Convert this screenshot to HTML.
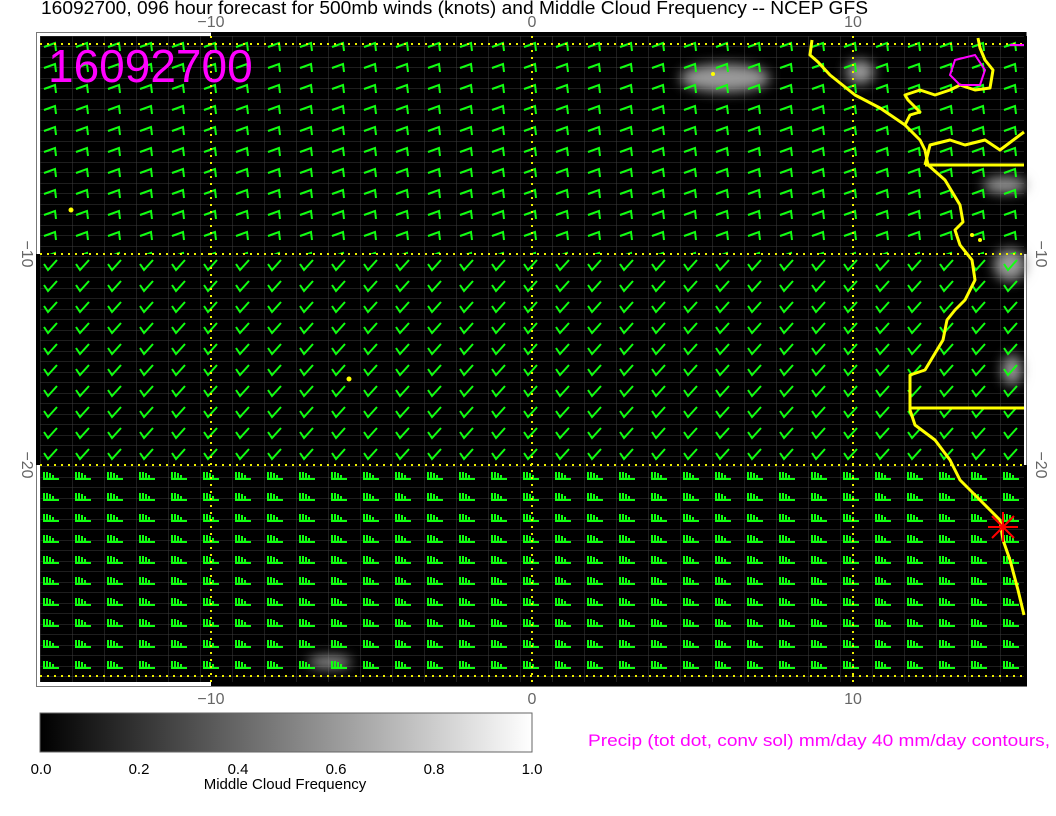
<!DOCTYPE html>
<html><head><meta charset="utf-8"><style>
body{margin:0;width:1056px;height:816px;background:#fff;overflow:hidden;font-family:"Liberation Sans",sans-serif}
</style></head><body>
<svg width="1056" height="816" xmlns="http://www.w3.org/2000/svg" style="position:absolute;left:0;top:0">
<defs>
<pattern id="grid" x="40" y="36" width="32" height="10.5" patternUnits="userSpaceOnUse">
<path d="M0 0H32M0 0V10.5" stroke="#3c3c3c" stroke-width="1" fill="none"/>
</pattern>
<pattern id="b1" x="40" y="33" width="32" height="21" patternUnits="userSpaceOnUse">
<path d="M4 14L15 10L16 18" stroke="#1f1" stroke-width="2" fill="none"/>
</pattern>
<pattern id="b2" x="40" y="254" width="32" height="21" patternUnits="userSpaceOnUse">
<path d="M4 10L8 16L17 6" stroke="#1f1" stroke-width="2" fill="none"/>
</pattern>
<pattern id="b3" x="40" y="465" width="32" height="21" patternUnits="userSpaceOnUse">
<path d="M3 14H19M4 7V14M7 7V14M10 8V14M13 10V14" stroke="#1f1" stroke-width="2" fill="none"/>
</pattern>
<linearGradient id="cb"><stop offset="0" stop-color="#000"/><stop offset="1" stop-color="#fff"/></linearGradient>
<filter id="bl"><feGaussianBlur stdDeviation="6"/></filter>
</defs>
<text x="41" y="14" font-size="18" fill="#000" textLength="827" lengthAdjust="spacingAndGlyphs">16092700, 096 hour forecast for 500mb winds (knots) and Middle Cloud Frequency -- NCEP GFS</text>
<g font-size="16" fill="#666" text-anchor="middle">
<text x="211" y="27">−10</text><text x="532" y="27">0</text><text x="853" y="27">10</text>
<text x="211" y="704">−10</text><text x="532" y="704">0</text><text x="853" y="704">10</text>
<text transform="translate(22,254) rotate(90)">−10</text>
<text transform="translate(22,465) rotate(90)">−20</text>
<text transform="translate(1036,254) rotate(90)">−10</text>
<text transform="translate(1036,465) rotate(90)">−20</text>
</g>
<rect x="36.5" y="32.5" width="990" height="654" fill="none" stroke="#777"/>
<rect x="211" y="32" width="815" height="4" fill="#000"/>
<rect x="211" y="682" width="815" height="4" fill="#000"/>
<rect x="36" y="254" width="4" height="211" fill="#000"/>
<rect x="1024" y="36" width="3" height="218" fill="#000"/>
<rect x="1024" y="465" width="3" height="221" fill="#000"/>
<rect x="40" y="36" width="984" height="646" fill="#000"/>
<rect x="40" y="36" width="984" height="646" fill="url(#grid)"/>
<g filter="url(#bl)" fill="#999">
<ellipse cx="725" cy="78" rx="45" ry="14"/><ellipse cx="860" cy="72" rx="14" ry="12"/>
<ellipse cx="1005" cy="185" rx="22" ry="8"/><ellipse cx="1010" cy="265" rx="16" ry="16"/>
<ellipse cx="1012" cy="370" rx="10" ry="15"/><ellipse cx="330" cy="662" rx="22" ry="6"/>
</g>
<rect x="40" y="36" width="984" height="218" fill="url(#b1)"/>
<rect x="40" y="254" width="984" height="211" fill="url(#b2)"/>
<rect x="40" y="465" width="984" height="217" fill="url(#b3)"/>
<g stroke="#ee0" stroke-width="2" stroke-dasharray="2 5" fill="none">
<path d="M211 36V682M532 36V682M853 36V682M40 44H1024M40 254H1024M40 465H1024M40 676H1024"/>
</g>
<g stroke="#ff0" stroke-width="3" fill="none" stroke-linejoin="round">
<path d="M812 40L810 55L818 62L830 75L855 95L880 108L905 125L920 140L925 150L928 165L945 180L960 205L963 222L955 230L960 245L972 260L975 280L965 300L955 310L947 320L943 340L925 370L910 375L910 410L915 425L935 440L950 460L960 480L980 500L1000 520L1003 540L1010 560L1018 590L1024 615"/>
<path d="M925 165H1024M910 408H1024M905 125L910 115L920 112L908 100L905 95L920 90L935 95L950 90L960 85L975 90L990 88L993 70L985 60L980 48L978 38"/>
<path d="M925 165L930 145L950 140L965 145L985 140L1000 150L1024 132"/>
</g>
<g fill="#ff0"><circle cx="71" cy="210" r="2.5"/><circle cx="349" cy="379" r="2.5"/><circle cx="713" cy="74" r="2"/><circle cx="972" cy="235" r="2"/><circle cx="980" cy="240" r="2"/></g>
<g stroke="#f0f" stroke-width="2" fill="none"><path d="M955 60L975 55L985 70L980 85L960 85L950 75Z"/><path d="M1010 45L1024 45"/></g>
<g stroke="#f00" stroke-width="2"><path d="M988 527H1018M1003 512V542M992 516L1014 538M992 538L1014 516"/></g>
<text x="48" y="82" font-size="46" fill="#f0f">16092700</text>
<rect x="40" y="713" width="492" height="39" fill="url(#cb)" stroke="#666"/>
<g font-size="15" fill="#000" text-anchor="middle">
<text x="41" y="774">0.0</text><text x="139" y="774">0.2</text><text x="238" y="774">0.4</text><text x="336" y="774">0.6</text><text x="434" y="774">0.8</text><text x="532" y="774">1.0</text>
<text x="285" y="789">Middle Cloud Frequency</text>
</g>
<text x="588" y="746" font-size="17" fill="#f0f" textLength="462" lengthAdjust="spacingAndGlyphs">Precip (tot dot, conv sol) mm/day 40 mm/day contours,</text>
</svg>
</body></html>
